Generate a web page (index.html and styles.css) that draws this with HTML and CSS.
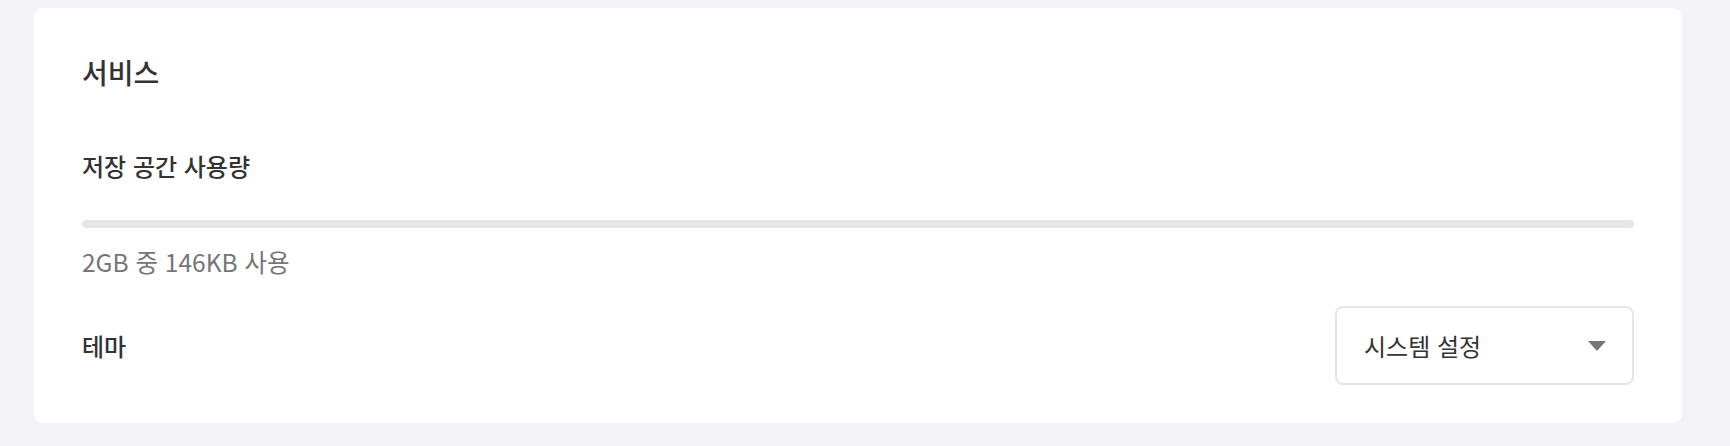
FILE: index.html
```html
<!DOCTYPE html>
<html lang="ko">

<head>
    <meta charset="UTF-8">
    <meta name="viewport" content="width=device-width, initial-scale=1.0">
    <title>설정</title>
    <link rel="stylesheet" href="styles.css">
</head>

<body>

    <div class="container">
        <div class="card">
            <h2 class="card-title">서비스</h2>

            <div class="storage">
                <h3 class="item-title">저장 공간 사용량</h3>
                <div class="usage-bar">
                    <div class="usage-fill" style="width: 0%"></div>
                </div>
                <p class="usage-text">2GB 중 146KB 사용</p>
            </div>

            <div class="setting-row">
                <h3 class="item-title">테마</h3>
                <div class="select">
                    <span>시스템 설정</span>
                    <span class="select-arrow"></span>
                </div>
            </div>
        </div>
    </div>

</body>

</html>
```

FILE: styles.css
```css
body {
    font-family: "Noto Sans CJK KR", "Noto Sans", sans-serif;
    background-color: #f2f2f7;
    margin: 0;
    padding: 0;
    color: #333;
}

.container {
    padding: 8px 48px 22px 34px;
}

.card {
    background-color: #fff;
    border-radius: 9px;
    padding: 46px 48px 38px 48px;
}

.card-title {
    font-size: 28px;
    font-weight: 500;
    line-height: 36px;
    margin: 0;
}

.storage {
    margin-top: 60px;
}

.item-title {
    font-size: 24px;
    font-weight: 500;
    line-height: 31px;
    margin: 0;
}

.usage-bar {
    margin-top: 39px;
    height: 8px;
    background-color: #e5e5ea;
    border-radius: 4px;
    overflow: hidden;
}

.usage-fill {
    height: 100%;
    background-color: #007aff;
}

.usage-text {
    font-size: 24.5px;
    line-height: 31px;
    color: #767676;
    margin: 18px 0 0 0;
}

.setting-row {
    display: flex;
    justify-content: space-between;
    align-items: center;
    margin-top: 29px;
}

.select {
    display: flex;
    justify-content: space-between;
    align-items: center;
    box-sizing: border-box;
    width: 299px;
    height: 79px;
    padding: 0 26px 0 27px;
    border: 2px solid #e6e6e6;
    border-radius: 8px;
    font-size: 24px;
    color: #333;
    cursor: pointer;
}

.select-arrow {
    width: 0;
    height: 0;
    border-left: 9.5px solid transparent;
    border-right: 9.5px solid transparent;
    border-top: 10px solid #767676;
}
```
